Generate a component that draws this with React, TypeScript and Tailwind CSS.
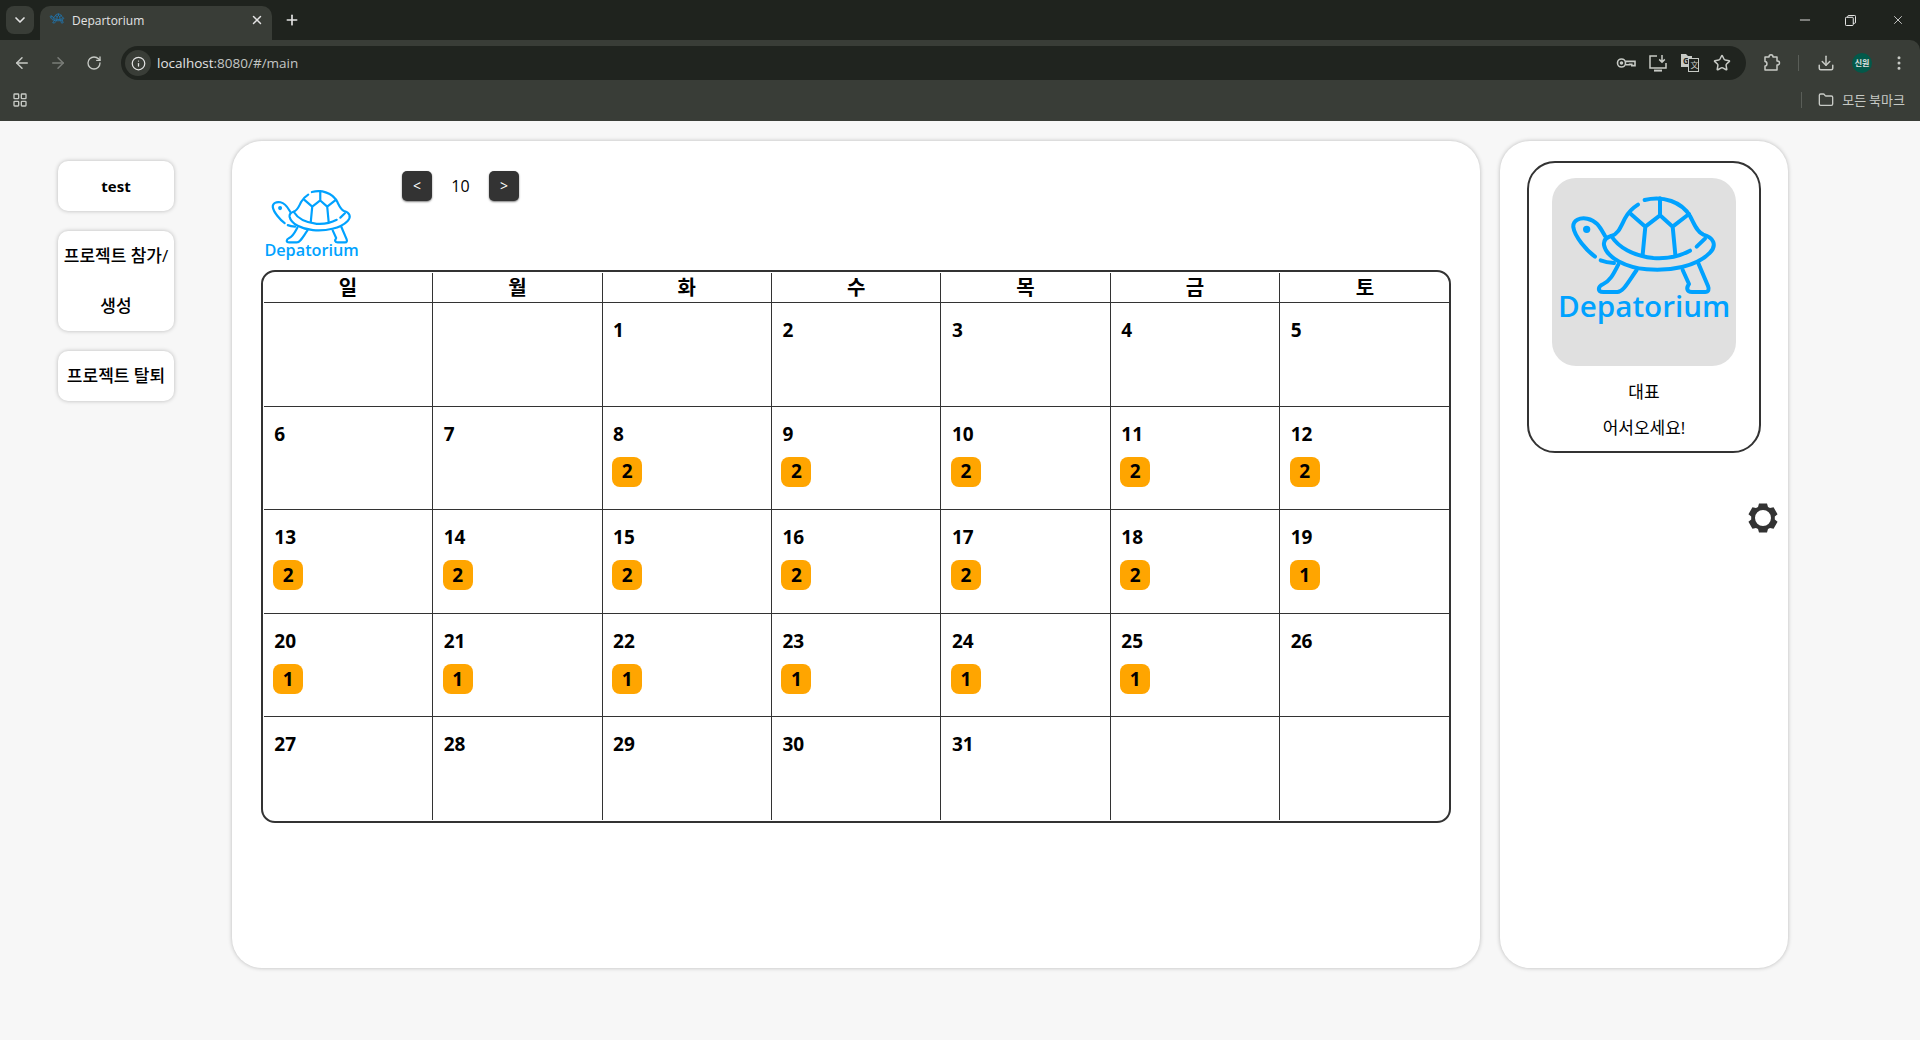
import { ArrowLeft, ArrowRight, ChevronDown, Download, EllipsisVertical, Folder, Info, LayoutGrid, Minus, Plus, RotateCw, Star, X } from 'lucide-react'

const FONT = 'font-["Open_Sans","Noto_Sans_CJK_KR",sans-serif]'
const WEEK = ['일', '월', '화', '수', '목', '금', '토']

// 35 cells for the month, blank ones are null
const DAYS: (number | null)[] = [
  null, null, 1, 2, 3, 4, 5,
  6, 7, 8, 9, 10, 11, 12,
  13, 14, 15, 16, 17, 18, 19,
  20, 21, 22, 23, 24, 25, 26,
  27, 28, 29, 30, 31, null, null,
]

function badgeFor(day: number) {
  if (day >= 8 && day <= 18) return 2
  if (day >= 19 && day <= 25) return 1
  return 0
}

function Turtle({ showName = true, color = '#00a2ff', stroke = 12, className = '' }) {
  return (
    <svg viewBox="186 144 552 564" className={className} fill="none" stroke={color} strokeWidth={stroke} strokeLinecap="round" strokeLinejoin="round">
      <path d="M345 318 C332 296 322 272 292 266 C270 262 248 270 250 292 C254 320 290 362 315 380" />
      <circle cx="290" cy="298" r="5" fill={color} />
      <path d="M332 391 C345 396 358 398 372 399" />
      <path d="M364 318 C385 312 392 290 405 265 C415 246 428 234 444 224" />
      <path d="M464 210 C520 196 575 216 600 258 C612 280 620 305 640 314 C670 322 682 345 660 368 C620 410 540 424 470 418 C410 412 350 385 342 345 C340 330 350 322 364 318 C385 352 430 378 490 384 C530 387 570 378 600 362" />
      <path d="M620 350 L645 326" />
      <path d="M510 205 L510 256 M420 250 L466 290 L510 256 L548 290 L597 252 M466 290 L458 374 M548 290 L556 374" />
      <path d="M385 404 C372 428 362 452 340 462 C322 470 322 486 340 486 L382 486 C398 486 408 466 440 420" />
      <path d="M578 420 L597 462 C588 474 590 486 606 486 L645 486 C656 486 658 478 654 468 L625 400" />
      {showName && (
        <text x="204" y="562" fill={color} stroke="none" fontFamily="Open Sans" fontWeight="600" fontSize="88" textLength="517" lengthAdjust="spacingAndGlyphs">
          Depatorium
        </text>
      )}
    </svg>
  )
}

function KeyIcon() {
  return (
    <svg viewBox="0 0 20 20" className="w-5 h-5" fill="none" stroke="#c7cac5" strokeWidth="1.6">
      <circle cx="5.5" cy="10" r="4" />
      <circle cx="5.5" cy="10" r="1" fill="#c7cac5" />
      <path d="M9.5 8.4 H19 V12.6 H15.8 V11.4 H13.6 V11.8 H9.5" />
    </svg>
  )
}

function InstallIcon() {
  return (
    <svg viewBox="0 0 20 20" className="w-5 h-5" fill="none" stroke="#c7cac5" strokeWidth="1.5">
      <path d="M9 3 H2 V15 H18 V10" />
      <path d="M6 17.6 H14" strokeWidth="2" />
      <path d="M14 2 V9 M11.2 6.4 L14 9.2 L16.8 6.4" />
    </svg>
  )
}

function TranslateIcon() {
  return (
    <svg viewBox="0 0 20 20" className="w-5 h-5">
      <path d="M1 1 H6 L8 3 H12 V14 H1 Z" fill="#c7cac5" />
      <text x="3" y="11" fontSize="8" fontWeight="700" fontFamily="Open Sans" fill="#20241f">G</text>
      <rect x="8.5" y="5.5" width="10" height="13" fill="#20241f" stroke="#c7cac5" />
      <text x="10.5" y="14.5" fontSize="8" fontFamily="Noto Sans CJK SC" fill="#c7cac5">文</text>
    </svg>
  )
}

function PuzzleIcon() {
  return (
    <svg viewBox="0 0 20 20" className="w-5 h-5" fill="none" stroke="#c7cac5" strokeWidth="1.5" strokeLinejoin="round">
      <path d="M3 4 H7 C7 1 11 1 11 4 H15 V8 C18.4 8 18.4 12 15 12 V17 H3 V13 C5.6 13 5.6 8.4 3 8.4 Z" />
    </svg>
  )
}

function RestoreIcon() {
  return (
    <svg viewBox="0 0 12 12" className="w-[11px] h-[11px]" fill="none" stroke="#fff" strokeWidth="1">
      <rect x="0.5" y="2.5" width="8.5" height="9" rx="1" />
      <path d="M3 2.5 V1.5 Q3 0.5 4 0.5 H10.5 Q11.5 0.5 11.5 1.5 V8 Q11.5 9 10.5 9 H9" />
    </svg>
  )
}

function Gear() {
  return (
    <svg viewBox="0 0 30 30" className="w-[30px] h-[30px]" fill="#333">
      <path fillRule="evenodd" d="M11 0.5 H19 L20 3.9 L22 4.9 L25.56 4.29 L29.56 11.21 L26.8 13.5 V16.5 L29.56 18.79 L25.56 25.71 L22 25.1 L20 26.1 L19 29.5 H11 L10 26.1 L8 25.1 L4.44 25.71 L0.44 18.79 L3.2 16.5 V13.5 L0.44 11.21 L4.44 4.29 L8 4.9 L10 3.9 Z M15 7 A8 8 0 1 0 15 23 A8 8 0 1 0 15 7 Z" />
    </svg>
  )
}

function Slot({ children }: { children: React.ReactNode }) {
  return <div className="w-8 h-8 flex items-center justify-center shrink-0">{children}</div>
}

function BrowserChrome() {
  return (
    <div className="shrink-0 bg-[#1f231e] text-[#e3e3e3]">
      {/* tab strip */}
      <div className="h-10 flex items-end">
        <div className="w-7 h-7 ml-1.5 mb-1.5 rounded-lg bg-[#393d37] flex items-center justify-center">
          <ChevronDown className="w-4 h-4" strokeWidth={2.5} />
        </div>
        <div className="w-[232px] h-[34px] ml-1.5 rounded-t-[10px] bg-[#393d37] flex items-start pl-2 pr-2">
          <Turtle showName={false} color="#1f78b4" stroke={26} className="w-[18px] h-[18px] mt-[6px] shrink-0" />
          <span className="ml-1.5 mt-[7px] text-xs leading-4">Departorium</span>
          <X className="ml-auto mt-[7px] w-3.5 h-3.5" strokeWidth={2.5} />
        </div>
        <Plus className="w-4 h-4 ml-3 mb-[12px]" strokeWidth={2.5} />
        <div className="ml-auto flex items-center h-10 text-white">
          <Minus className="w-4 h-4" strokeWidth={1.25} />
          <div className="ml-[32px]">
            <RestoreIcon />
          </div>
          <X className="ml-[35px] mr-[15px] w-[14px] h-[14px]" strokeWidth={1.25} />
        </div>
      </div>

      {/* toolbar */}
      <div className="h-[81px] bg-[#393d37] rounded-tr-[10px]">
        <div className="h-10 flex items-center pt-[6px] pl-[6px]">
          <Slot><ArrowLeft className="w-[18px] h-[18px] text-[#c7cac5]" /></Slot>
          <div className="w-1" />
          <Slot><ArrowRight className="w-[18px] h-[18px] text-[#7a7d78]" /></Slot>
          <div className="w-1" />
          <Slot><RotateCw className="w-4 h-4 text-[#c7cac5]" /></Slot>
          <div className="w-[11px]" />
          <div className="w-[1625px] h-[34px] rounded-full bg-[#20241f] flex items-center pl-1 pr-2">
            <div className="w-[26px] h-[26px] rounded-full bg-[#393d37] flex items-center justify-center">
              <Info className="w-[15px] h-[15px] text-[#e3e3e3]" />
            </div>
            <span className="ml-1.5 text-[13.5px] leading-none mt-px">
              localhost<span className="text-[#c4c7c5]">:8080/#/main</span>
            </span>
            <div className="ml-auto flex">
              <Slot><KeyIcon /></Slot>
              <Slot><InstallIcon /></Slot>
              <Slot><TranslateIcon /></Slot>
              <Slot><Star className="w-[18px] h-[18px] text-[#c7cac5]" /></Slot>
            </div>
          </div>
          <div className="ml-2.5"><Slot><PuzzleIcon /></Slot></div>
          <div className="w-px h-4 bg-[#5a5e58] ml-[10px] mr-[11px]" />
          <Slot><Download className="w-[18px] h-[18px] text-[#c7cac5]" /></Slot>
          <div className="ml-1 w-8 flex justify-center">
            <div className="w-5 h-5 rounded-full bg-[#03594a] text-[8px] font-semibold flex items-center justify-center font-['Noto_Sans_CJK_KR']">신원</div>
          </div>
          <div className="ml-[5px]"><Slot><EllipsisVertical className="w-[18px] h-[18px] text-[#c7cac5]" /></Slot></div>
        </div>
        <div className="h-10 flex items-center pl-3">
          <LayoutGrid className="w-4 h-4 text-[#c7cac5]" />
          <div className="ml-auto w-px h-4 bg-[#5a5e58]" />
          <Folder className="ml-4 w-4 h-4 text-[#c7cac5]" />
          <span className="ml-2 mr-[15px] text-[13px] text-[#c7cac5] font-['Noto_Sans_CJK_KR']">모든 북마크</span>
        </div>
      </div>
    </div>
  )
}

function SideButton({ children, tall = false, korean = false }: { children: React.ReactNode; tall?: boolean; korean?: boolean }) {
  return (
    <button className={`w-[116px] ${tall ? 'h-[100px]' : 'h-[50px]'} rounded-[10px] bg-white shadow-[0_0_4px_rgba(0,0,0,0.25)] ${korean ? 'text-[17px] font-medium' : 'text-[15px] font-bold'} text-black leading-[50px] whitespace-nowrap`}>
      {children}
    </button>
  )
}

function NavButton({ children }: { children: React.ReactNode }) {
  return (
    <button className="w-[30px] h-[30px] rounded-[5px] bg-[#333] text-white text-sm shadow-[0_1px_2px_rgba(0,0,0,0.5)] flex items-center justify-center">
      {children}
    </button>
  )
}

function Calendar() {
  return (
    <div className="w-[1189.4px] ml-[29.4px] border-2 border-[#333] rounded-[14px] pt-px pb-px">
      <div className="w-[1185.8px] ml-[0.4px] grid grid-cols-7 grid-rows-[30px_repeat(4,103.6px)_102.6px]">
        {WEEK.map((name, i) => (
          <div key={name} className={`border-b border-[#333] ${i < 6 ? 'border-r' : ''} flex items-center justify-center text-[20px] font-bold text-black`}>
            {name}
          </div>
        ))}
        {DAYS.map((day, i) => (
          <div key={i} className={`border-[#333] ${i % 7 < 6 ? 'border-r' : ''} ${i < 28 ? 'border-b' : ''} pl-[9.5px] pt-[14px]`}>
            {day !== null && (
              <>
                <div className="ml-px text-[19px] leading-[26px] font-bold text-black">{day}</div>
                {badgeFor(day) > 0 && (
                  <div className="mt-[10px] w-[30px] h-[30px] rounded-lg bg-[#ffa500] flex items-center justify-center text-[19px] font-bold text-black">
                    {badgeFor(day)}
                  </div>
                )}
              </>
            )}
          </div>
        ))}
      </div>
    </div>
  )
}

export default function App() {
  return (
    <div className={`h-[1040px] flex flex-col overflow-hidden bg-[#f7f7f7] ${FONT}`}>
      <BrowserChrome />
      <div className="flex-1 flex items-start pl-[58px]">
        <div className="w-[116px] mt-10 flex flex-col gap-5">
          <SideButton>test</SideButton>
          <SideButton tall korean>프로젝트 참가/<br />생성</SideButton>
          <SideButton korean>프로젝트 탈퇴</SideButton>
        </div>

        <div className="w-[1248px] h-[827px] ml-[58px] mt-5 rounded-[30px] bg-white shadow-[0_0_4px_rgba(0,0,0,0.25)]">
          <div className="h-[129px] flex items-start pl-[29px]">
            <Turtle className="w-[101px] h-[103px] mt-[39px] shrink-0" />
            <div className="ml-10 mt-[30px] flex items-center">
              <NavButton>&lt;</NavButton>
              <span className="w-[57px] text-center text-base text-black">10</span>
              <NavButton>&gt;</NavButton>
            </div>
          </div>
          <Calendar />
        </div>

        <div className="w-[288px] h-[827px] ml-5 mt-5 rounded-[30px] bg-white shadow-[0_0_4px_rgba(0,0,0,0.25)] flex flex-col">
          <div className="w-[234px] h-[292px] ml-[27px] mt-5 border-2 border-[#333] rounded-[28px] pt-[15px] flex flex-col items-center text-[17px] text-black">
            <div className="w-[184px] h-[188px] rounded-[24px] bg-[#e0e0e0] shrink-0">
              <Turtle className="w-[184px] h-[188px]" />
            </div>
            <div className="mt-2 leading-9">대표</div>
            <div className="leading-9">어서오세요!</div>
          </div>
          <div className="self-end mr-[10px] mt-[50px]">
            <Gear />
          </div>
        </div>
      </div>
    </div>
  )
}
